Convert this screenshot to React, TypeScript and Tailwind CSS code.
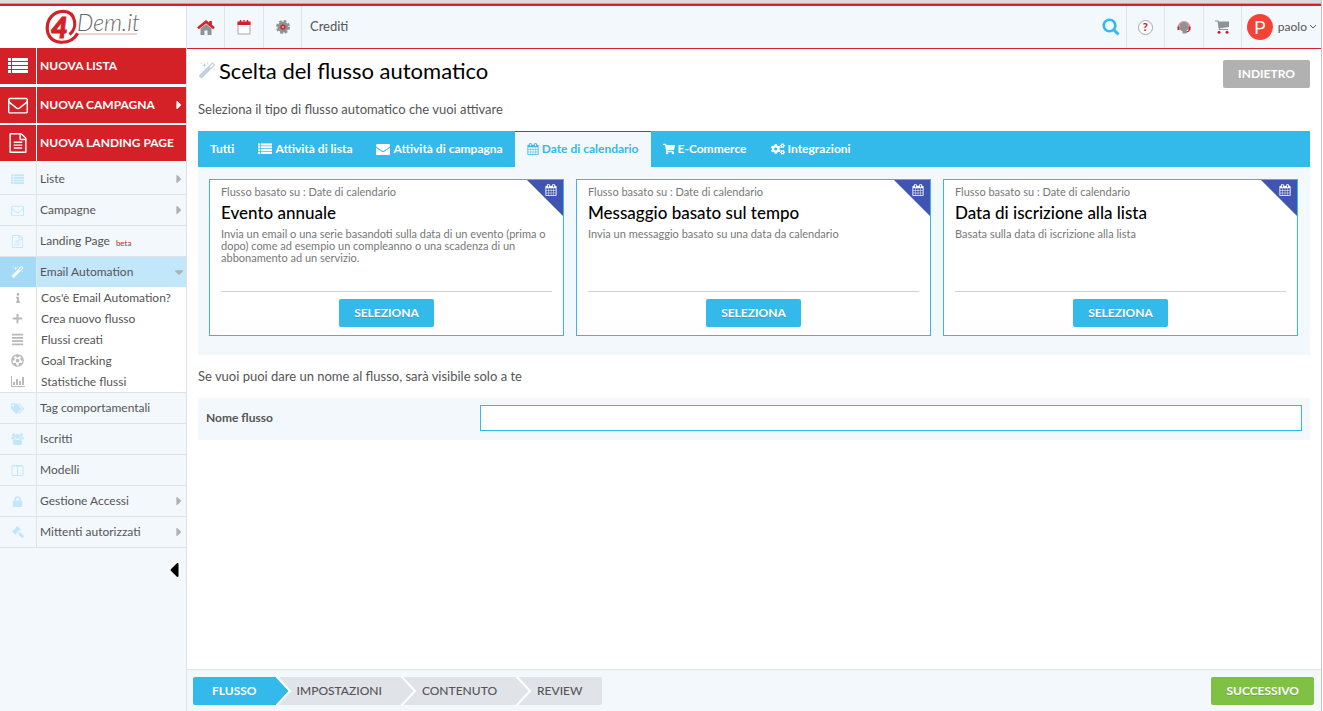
import { useState } from 'react';
import type { ReactNode } from 'react';
import {
  FaAlignJustify,
  FaCaretDown,
  FaCaretLeft,
  FaCaretRight,
  FaCogs,
  FaFutbol,
  FaGavel,
  FaInfo,
  FaLock,
  FaPlus,
  FaShoppingCart,
  FaTags,
} from 'react-icons/fa';

type IconProps = { className?: string };

const Glyph = ({ d, className }: { d: string; className?: string }) => (
  <svg viewBox="0 0 1792 1792" fill="currentColor" className={className} aria-hidden="true">
    <path d={d} />
  </svg>
);

const MagicIcon = ({ className }: IconProps) => (
  <Glyph
    className={className}
    d="M1254 581l293-293-107-107-293 293zm447-293q0 27-18 45l-1286 1286q-18 18-45 18t-45-18l-198-198q-18-18-18-45t18-45l1286-1286q18-18 45-18t45 18l198 198q18 18 18 45zm-1351-190l98 30-98 30-30 98-30-98-98-30 98-30 30-98zm350 162l196 60-196 60-60 196-60-196-196-60 196-60 60-196zm930 478l98 30-98 30-30 98-30-98-98-30 98-30 30-98zm-640-640l98 30-98 30-30 98-30-98-98-30 98-30 30-98z"
  />
);

const EnvelopeOutlineIcon = ({ className }: IconProps) => (
  <Glyph
    className={className}
    d="M1664 1504v-768q-32 36-69 66-268 206-426 338-51 43-83 67t-86.5 48.5-102.5 24.5h-2q-48 0-102.5-24.5t-86.5-48.5-83-67q-158-132-426-338-37-30-69-66v768q0 13 9.5 22.5t22.5 9.5h1472q13 0 22.5-9.5t9.5-22.5zm0-1051v-24.5l-.5-13-3-12.5-5.5-9-9-7.5-14-2.5h-1472q-13 0-22.5 9.5t-9.5 22.5q0 168 147 284 193 152 401 317 6 5 35 29.5t46 37.5 44.5 31.5 50.5 27.5 43 9h2q20 0 43-9t50.5-27.5 44.5-31.5 46-37.5 35-29.5q208-165 401-317 54-43 100.5-115.5t46.5-131.5zm128-37v1088q0 66-47 113t-113 47h-1472q-66 0-113-47t-47-113v-1088q0-66 47-113t113-47h1472q66 0 113 47t47 113z"
  />
);

const EnvelopeIcon = ({ className }: IconProps) => (
  <Glyph
    className={className}
    d="M1792 710v794q0 66-47 113t-113 47h-1472q-66 0-113-47t-47-113v-794q44 49 101 87 362 246 497 345 57 42 92.5 65.5t94.5 48 110 24.5h2q51 0 110-24.5t94.5-48 92.5-65.5q170-123 498-345 57-39 100-87zm0-294q0 79-49 151t-122 123q-376 261-468 325-10 7-42.5 31t-54 38.5-52 32.5-57.5 27-50 9h-2q-23 0-50-9t-57.5-27-52-32.5-54-38.5-42.5-31q-91-64-262-182.5t-205-142.5q-62-42-117-115.5t-55-136.5q0-78 41.5-130t118.5-52h1472q65 0 112.5 47t47.5 113z"
  />
);

const FileIcon = ({ className }: IconProps) => (
  <Glyph
    className={className}
    d="M1596 380q28 28 48 76t20 88v1152q0 40-28 68t-68 28h-1344q-40 0-68-28t-28-68v-1600q0-40 28-68t68-28h896q40 0 88 20t76 48zm-444-244v376h376q-10-29-22-41l-313-313q-12-12-41-22zm384 1528v-1024h-416q-40 0-68-28t-28-68v-416h-768v1536h1280zm-1024-864q0-14 9-23t23-9h704q14 0 23 9t9 23v64q0 14-9 23t-23 9h-704q-14 0-23-9t-9-23v-64zm736 224q14 0 23 9t9 23v64q0 14-9 23t-23 9h-704q-14 0-23-9t-9-23v-64q0-14 9-23t23-9h704zm0 256q14 0 23 9t9 23v64q0 14-9 23t-23 9h-704q-14 0-23-9t-9-23v-64q0-14 9-23t23-9h704z"
  />
);

const CalendarIcon = ({ className }: IconProps) => (
  <Glyph
    className={className}
    d="M192 1664h288v-288h-288v288zm352 0h320v-288h-320v288zm-352-352h288v-320h-288v320zm352 0h320v-320h-320v320zm-352-384h288v-288h-288v288zm736 736h320v-288h-320v288zm-384-736h320v-288h-320v288zm768 736h288v-288h-288v288zm-384-352h320v-320h-320v320zm-352-864v-288q0-13-9.5-22.5t-22.5-9.5h-64q-13 0-22.5 9.5t-9.5 22.5v288q0 13 9.5 22.5t22.5 9.5h64q13 0 22.5-9.5t9.5-22.5zm736 864h288v-320h-288v320zm-384-384h320v-288h-320v288zm384 0h288v-288h-288v288zm32-480v-288q0-13-9.5-22.5t-22.5-9.5h-64q-13 0-22.5 9.5t-9.5 22.5v288q0 13 9.5 22.5t22.5 9.5h64q13 0 22.5-9.5t9.5-22.5zm384-64v1280q0 52-38 90t-90 38h-1408q-52 0-90-38t-38-90v-1280q0-52 38-90t90-38h128v-96q0-66 47-113t113-47h64q66 0 113 47t47 113v96h384v-96q0-66 47-113t113-47h64q66 0 113 47t47 113v96h128q52 0 90 38t38 90z"
  />
);

const ListIcon = ({ className }: IconProps) => (
  <svg viewBox="0 0 20 20" fill="currentColor" className={className} aria-hidden="true">
    {[2, 6, 10, 14].map((y) => (
      <g key={y}>
        <rect x="0" y={y} width="3" height="3" />
        <rect x="4" y={y} width="16" height="3" />
      </g>
    ))}
  </svg>
);

const UsersIcon = ({ className }: IconProps) => (
  <svg viewBox="0 0 14 13" fill="currentColor" className={className} aria-hidden="true">
    <circle cx="2.800" cy="2.200" r="1.900" />
    <circle cx="11.200" cy="2.200" r="1.900" />
    <circle cx="7" cy="3.800" r="2.700" />
    <path d="M1.500 4.200h2.300a3.500 3.500 0 001 2.600H1.300Q0 6.800 0 5.500t1.500-1.300zM12.500 4.200h-2.300a3.500 3.500 0 01-1 2.600h3.500q1.300 0 1.300-1.300t-1.500-1.300z" />
    <path d="M4.500 6.500a4 4 0 005 0q2.500 0 2.500 4 0 2.500-2 2.500H4q-2 0-2-2.500 0-4 2.500-4z" />
  </svg>
);

const ColumnsIcon = ({ className }: IconProps) => (
  <svg viewBox="0 0 13 13" fill="none" stroke="currentColor" className={className} aria-hidden="true">
    <rect x="1" y="1.5" width="11" height="10" rx="1" />
    <path d="M1 2h11M6.5 2v9" />
  </svg>
);

const ChartIcon = ({ className }: IconProps) => (
  <svg viewBox="0 0 14 13" fill="currentColor" className={className} aria-hidden="true">
    <path d="M0 1h1v10h13v1H0zM2 7h2v3H2zM5 4h2v6H5zM8 6h2v4H8zM11 2h2v8h-2z" />
  </svg>
);

const Logo = () => (
  <svg viewBox="0 0 100 38" className="h-[38px] w-[100px]" role="img" aria-label="4Dem.it">
    <path
      d="M26.500 26.500c4-3 6-8.500 5-13.500C30 6 25.500 3 19.500 3.300 10.500 3.500 4.200 11 4.200 20c0 8 5 13.500 13 14.200 8 .5 14-2.500 17.500-9"
      fill="none"
      stroke="#d42027"
      strokeWidth="3.200"
    />
    <text x="8" y="30" fill="#d42027" stroke="#d42027" fontSize="29" fontStyle="italic" fontWeight="900" fontFamily="Lato, sans-serif">4</text>
    <text x="34" y="23" fill="#666" fontSize="23" fontStyle="italic" fontWeight="300" fontFamily="Lato, sans-serif">Dem.it</text>
    <path d="M36 26h58" stroke="#e9a0a2" />
  </svg>
);

const HomeIcon = () => (
  <svg viewBox="0 0 18 15" className="h-[15px] w-[18px]" aria-hidden="true">
    <path d="M3.500 8.500L9 4l5.500 4.500V15h-4v-4.500h-3V15h-4z" fill="#8e9396" />
    <path d="M1 8.300L9 1.800l8 6.500M13.600 1v4" fill="none" stroke="#d42027" strokeWidth="2.600" />
  </svg>
);

const CalendarOutlineIcon = () => (
  <svg viewBox="0 0 14 15" className="h-[15px] w-[14px]" aria-hidden="true">
    <rect x="1" y="3" width="12" height="11" fill="#fff" stroke="#a3a7aa" />
    <path d="M.5 1.500h13V5H.5z" fill="#d42027" />
    <path d="M3.500 0v3M7 0v1.500M10.500 0v3" stroke="#d42027" strokeWidth="1.500" />
  </svg>
);

const GearIcon = () => (
  <svg viewBox="0 0 14 14" className="h-[14px] w-[14px]" aria-hidden="true">
    <circle cx="7" cy="7" r="5.500" fill="#8e9396" />
    <circle cx="7" cy="7" r="6" fill="none" stroke="#8e9396" strokeWidth="2" strokeDasharray="2.700 2.010" />
    <circle cx="7" cy="7" r="1.800" fill="#c9cdd0" stroke="#d42027" strokeWidth="1.600" />
  </svg>
);

const SearchIcon = () => (
  <svg viewBox="0 0 18 18" className="h-[18px] w-[18px]" fill="none" stroke="#33b9ea" aria-hidden="true">
    <circle cx="7.500" cy="7.500" r="5.800" strokeWidth="2.600" />
    <path d="M11.800 11.800l4.700 4.700" strokeWidth="3" />
  </svg>
);

const HeadsetIcon = () => (
  <svg viewBox="0 0 14 14" className="h-[14px] w-[14px]" aria-hidden="true">
    <path d="M2.500 6a4.500 4 0 019 0v3l-2 1.500v3h-4v-2Q2.500 10 2.500 8z" fill="#8e9396" />
    <path d="M1.300 7.500a5.700 5.700 0 0111.400 0" fill="none" stroke="#dd8a8f" strokeWidth="1.500" />
    <path d="M.5 6.500h2v3.500h-2zM11.500 6.500h2v3.500h-2z" fill="#d42027" />
    <path d="M12.500 9.500q-.5 2.500-3.500 2.500" fill="none" stroke="#d42027" strokeWidth="1.200" />
  </svg>
);

const CartIcon = () => (
  <svg viewBox="0 0 15 14" className="h-[14px] w-[15px]" aria-hidden="true">
    <path d="M0 1h3l1.500 8.500H13" fill="none" stroke="#8e9396" strokeWidth="1.200" />
    <path d="M3 1.500h11v5.500l-10 1.500z" fill="#8e9396" />
    <circle cx="4" cy="12.300" r="1.500" fill="#d42027" />
    <circle cx="12" cy="12.300" r="1.500" fill="#d42027" />
  </svg>
);

const primaryMenu = [
  { label: 'NUOVA LISTA', icon: <ListIcon className="size-5" />, arrow: false },
  { label: 'NUOVA CAMPAGNA', icon: <EnvelopeOutlineIcon className="size-5" />, arrow: true },
  { label: 'NUOVA LANDING PAGE', icon: <FileIcon className="size-5" />, arrow: false },
];

type MenuItem = { label: string; icon: ReactNode; arrow?: boolean; beta?: boolean };

const topMenu: MenuItem[] = [
  { label: 'Liste', icon: <ListIcon className="size-[13px]" />, arrow: true },
  { label: 'Campagne', icon: <EnvelopeOutlineIcon className="size-[13px]" />, arrow: true },
  { label: 'Landing Page', icon: <FileIcon className="size-[13px]" />, beta: true },
];

const automationMenu: MenuItem[] = [
  { label: "Cos'è Email Automation?", icon: <FaInfo className="size-[10px]" /> },
  { label: 'Crea nuovo flusso', icon: <FaPlus className="size-[11px]" /> },
  { label: 'Flussi creati', icon: <FaAlignJustify className="size-[13px]" /> },
  { label: 'Goal Tracking', icon: <FaFutbol className="size-[13px]" /> },
  { label: 'Statistiche flussi', icon: <ChartIcon className="h-[13px] w-[14px]" /> },
];

const bottomMenu: MenuItem[] = [
  { label: 'Tag comportamentali', icon: <FaTags className="size-[13px]" /> },
  { label: 'Iscritti', icon: <UsersIcon className="h-3 w-[13px]" /> },
  { label: 'Modelli', icon: <ColumnsIcon className="size-[13px]" /> },
  { label: 'Gestione Accessi', icon: <FaLock className="size-[11px]" />, arrow: true },
  { label: 'Mittenti autorizzati', icon: <FaGavel className="size-[12px] -scale-x-100" />, arrow: true },
];

const tabs = [
  { label: 'Tutti', icon: null },
  { label: 'Attività di lista', icon: <ListIcon className="size-[14px]" /> },
  { label: 'Attività di campagna', icon: <EnvelopeIcon className="size-[14px]" /> },
  { label: 'Date di calendario', icon: <CalendarIcon className="size-[12px]" /> },
  { label: 'E-Commerce', icon: <FaShoppingCart className="size-[12px]" /> },
  { label: 'Integrazioni', icon: <FaCogs className="size-[14px]" /> },
];

const flows = [
  {
    title: 'Evento annuale',
    text: 'Invia un email o una serie basandoti sulla data di un evento (prima o dopo) come ad esempio un compleanno o una scadenza di un abbonamento ad un servizio.',
  },
  { title: 'Messaggio basato sul tempo', text: 'Invia un messaggio basato su una data da calendario' },
  { title: 'Data di iscrizione alla lista', text: 'Basata sulla data di iscrizione alla lista' },
];

function MenuRow({ item }: { item: MenuItem }) {
  return (
    <li className="border-b border-[#dfe3e7]">
      <a href="#" className="flex h-[30px] items-center">
        <span className="flex h-full w-9 items-center justify-center pr-px text-[#c3e7fa]">{item.icon}</span>
        <span className="flex h-full grow items-center border-l border-[#dfe3e7] pl-[3px]">
          {item.label}
          {item.beta && <span className="ml-[6px] pt-[3px] text-[8px] text-[#d42027]">beta</span>}
        </span>
        {item.arrow && <FaCaretRight className="size-[14px] text-[#b0b0b0]" />}
      </a>
    </li>
  );
}

function Sidebar() {
  return (
    <aside className="flex w-[187px] shrink-0 flex-col border-r border-[#dfe3e7] bg-[#f3f8fc]">
      <a href="#" className="flex h-[42px] items-center justify-center bg-white">
        <Logo />
      </a>
      <nav className="text-[12px]">
        <ul className="font-bold text-white">
          {primaryMenu.map((item) => (
            <li key={item.label} className="mb-0.5 first:mb-[3px]">
              <a href="#" className="flex h-9 items-center bg-[#d42027]">
                <span className="flex h-full w-9 items-center justify-center pr-px">{item.icon}</span>
                <span className="flex h-full grow items-center border-l border-white pl-[3px] whitespace-nowrap">
                  {item.label}
                </span>
                {item.arrow && <FaCaretRight className="size-[14px]" />}
              </a>
            </li>
          ))}
        </ul>
        <ul className="pt-px">
          {topMenu.map((item) => (
            <MenuRow key={item.label} item={item} />
          ))}
          <li className="border-b border-[#dfe3e7]">
            <a href="#" className="flex h-[30px] items-center bg-[#c3e7fa]">
              <span className="flex h-full w-9 items-center justify-center bg-[#a3dbf7] pr-px text-white">
                <MagicIcon className="size-[13px]" />
              </span>
              <span className="flex h-full grow items-center border-l border-[#dfe3e7] pl-[3px]">Email Automation</span>
              <FaCaretDown className="size-[14px] text-[#b0b0b0]" />
            </a>
            <ul className="bg-white">
              {automationMenu.map((item) => (
                <li key={item.label}>
                  <a href="#" className="flex h-[21px] items-center">
                    <span className="flex h-full w-9 items-center justify-center pr-px text-[#b9b9b9]">{item.icon}</span>
                    <span className="flex h-full grow items-center border-l border-[#dfe3e7] pl-1 whitespace-nowrap">
                      {item.label}
                    </span>
                  </a>
                </li>
              ))}
            </ul>
          </li>
          {bottomMenu.map((item) => (
            <MenuRow key={item.label} item={item} />
          ))}
        </ul>
      </nav>
      <button type="button" aria-label="Chiudi menu" className="mt-[10px] self-end text-black">
        <FaCaretLeft className="size-6" />
      </button>
    </aside>
  );
}

function Header() {
  return (
    <header className="flex h-[43px] items-stretch justify-between border-b border-[#d42027] bg-[#f3f8fc]">
      <nav className="flex divide-x divide-[#dfe3e7]">
        <a href="#" aria-label="Home" className="flex w-[38px] items-center justify-center"><HomeIcon /></a>
        <a href="#" aria-label="Calendario" className="flex w-[39px] items-center justify-center"><CalendarOutlineIcon /></a>
        <a href="#" aria-label="Impostazioni" className="flex w-[38px] items-center justify-center"><GearIcon /></a>
        <a href="#" className="flex items-center px-2 text-[13px]">Crediti</a>
      </nav>
      <nav className="flex divide-x divide-[#dfe3e7]">
        <button type="button" aria-label="Cerca" className="flex w-[30px] items-center justify-center"><SearchIcon /></button>
        <a href="#" aria-label="Aiuto" className="flex w-[38px] items-center justify-center">
          <span className="flex size-[15px] items-center justify-center rounded-full border border-[#a3a7aa] bg-white text-[11px] font-black text-[#d42027]">
            ?
          </span>
        </a>
        <a href="#" aria-label="Supporto" className="flex w-[39px] items-center justify-center"><HeadsetIcon /></a>
        <a href="#" aria-label="Carrello" className="flex w-[38px] items-center justify-center"><CartIcon /></a>
        <button type="button" className="flex items-center pr-1 pl-[5px] text-[12px]">
          <span className="flex size-[26px] items-center justify-center rounded-full bg-[#f44336] font-['Roboto',sans-serif] text-[18px] text-white">
            P
          </span>
          <span className="ml-[5px]">paolo</span>
          <svg viewBox="0 0 8 6" className="ml-[2px] h-[6px] w-2" fill="none" stroke="#555" aria-hidden="true">
            <path d="M1 1l3 3 3-3" />
          </svg>
        </button>
      </nav>
    </header>
  );
}

function FlowCard({ title, text }: { title: string; text: string }) {
  return (
    <article className="relative flex h-[157px] flex-col border border-[#33b9ea] bg-white px-[11px] pb-2 text-[11px] leading-3 text-[#777]">
      <div className="absolute top-0 right-0 h-9 w-9">
        <svg viewBox="0 0 36 36" className="absolute inset-0 h-9 w-9" aria-hidden="true">
          <path d="M0 0h36v36z" fill="#4054b2" />
        </svg>
        <CalendarIcon className="absolute top-1 right-[6px] size-3 text-white" />
      </div>
      <p className="mt-[6px]">Flusso basato su : Date di calendario</p>
      <h2 className="mt-1 text-[17px] leading-[22px] font-medium text-black">{title}</h2>
      <p className="mt-1 grow">{text}</p>
      <div className="border-t border-[#d2d2d2] pt-[7px] text-center">
        <button
          type="button"
          className="h-7 rounded-[2px] bg-[#33b9ea] px-[15px] text-[12px] font-bold text-white text-shadow-2xs"
        >
          SELEZIONA
        </button>
      </div>
    </article>
  );
}

// White chevron drawn between two wizard steps
const StepArrow = ({ fill }: { fill: string }) => (
  <svg viewBox="0 0 16 30" className="-my-px h-[30px] w-4 shrink-0" aria-hidden="true">
    <path d="M0 1h16v28H0z" fill="#e0e3e8" />
    <path d="M0 1l13 14L0 29z" fill={fill} />
    <path d="M0 0l14 15L0 30" fill="none" stroke="#fff" strokeWidth="2" />
  </svg>
);

function Footer() {
  return (
    <footer className="flex items-start justify-between border-t border-[#dfe3e7] bg-[#f3f8fc] pt-[7px] pr-[7px] pb-[6px] pl-[6px]">
      <ol className="flex h-7 text-[12px] font-medium">
        <li className="flex">
          <span className="flex items-center rounded-l-[2px] bg-[#33b9ea] px-[19px] font-bold text-white">FLUSSO</span>
          <StepArrow fill="#33b9ea" />
        </li>
        <li className="flex">
          <span className="flex items-center bg-[#e0e3e8] pr-[19px] pl-[5px]">IMPOSTAZIONI</span>
          <StepArrow fill="#e0e3e8" />
        </li>
        <li className="flex">
          <span className="flex items-center bg-[#e0e3e8] pr-[19px] pl-[5px]">CONTENUTO</span>
          <StepArrow fill="#e0e3e8" />
        </li>
        <li className="flex">
          <span className="flex items-center rounded-r-[2px] bg-[#e0e3e8] pr-[19px] pl-[5px]">REVIEW</span>
        </li>
      </ol>
      <button type="button" className="h-7 rounded-[2px] bg-[#7fc142] px-[15px] text-[12px] font-bold text-white text-shadow-2xs">
        SUCCESSIVO
      </button>
    </footer>
  );
}

export default function App() {
  const [activeTab, setActiveTab] = useState('Date di calendario');
  const [flowName, setFlowName] = useState('');

  return (
    <div className="mr-px flex min-h-screen flex-col border-r border-[#c4c4c4] bg-white font-['Lato',sans-serif] text-[#555]">
      <div className="h-1 border-b border-[#a9a9a9] bg-[#dcdcdc]" />
      <div className="flex grow border-t-2 border-[#d42027]">
        <Sidebar />
        <div className="flex min-w-0 grow flex-col">
          <Header />
          <main className="grow px-[11px] pt-[11px]">
            <div className="flex items-start justify-between">
              <h1 className="flex items-center gap-[3px] text-[22px] leading-[22px] text-black">
                <MagicIcon className="size-[18px] text-[#c5d0de]" />
                Scelta del flusso automatico
              </h1>
              <button type="button" className="h-7 rounded-[2px] bg-[#b1b1b1] px-[15px] text-[12px] font-bold text-white">
                INDIETRO
              </button>
            </div>
            <p className="mt-[11px] text-[13px] leading-5">Seleziona il tipo di flusso automatico che vuoi attivare</p>

            <div role="tablist" className="mt-3 flex h-9 bg-[#33b9ea] text-[12px] font-bold">
              {tabs.map((tab) => (
                <button
                  key={tab.label}
                  type="button"
                  role="tab"
                  aria-selected={activeTab === tab.label}
                  onClick={() => setActiveTab(tab.label)}
                  className={`flex items-center gap-[3px] border-t px-3 pb-0.5 ${
                    activeTab === tab.label
                      ? 'border-[#4054b2] bg-[#f3f8fc] text-[#33b9ea]'
                      : 'border-[#33b9ea] text-white'
                  }`}
                >
                  {tab.icon}
                  {tab.label}
                </button>
              ))}
            </div>
            <section className="grid grid-cols-3 gap-3 bg-[#f3f8fc] pt-3 pr-3 pb-[19px] pl-[11px]">
              {flows.map((flow) => (
                <FlowCard key={flow.title} title={flow.title} text={flow.text} />
              ))}
            </section>

            <p className="mt-[11px] text-[13px] leading-5">Se vuoi puoi dare un nome al flusso, sarà visibile solo a te</p>
            <div className="mt-3 flex items-center bg-[#f3f8fc] px-2 pt-[7px] pb-[9px]">
              <label htmlFor="flow-name" className="w-1/4 text-[12px] font-bold">
                Nome flusso
              </label>
              <input
                id="flow-name"
                type="text"
                value={flowName}
                onChange={(e) => setFlowName(e.target.value)}
                className="h-[26px] min-w-0 grow border border-[#33b9ea] bg-white px-2 text-[13px] outline-none"
              />
            </div>
          </main>
          <Footer />
        </div>
      </div>
    </div>
  );
}
